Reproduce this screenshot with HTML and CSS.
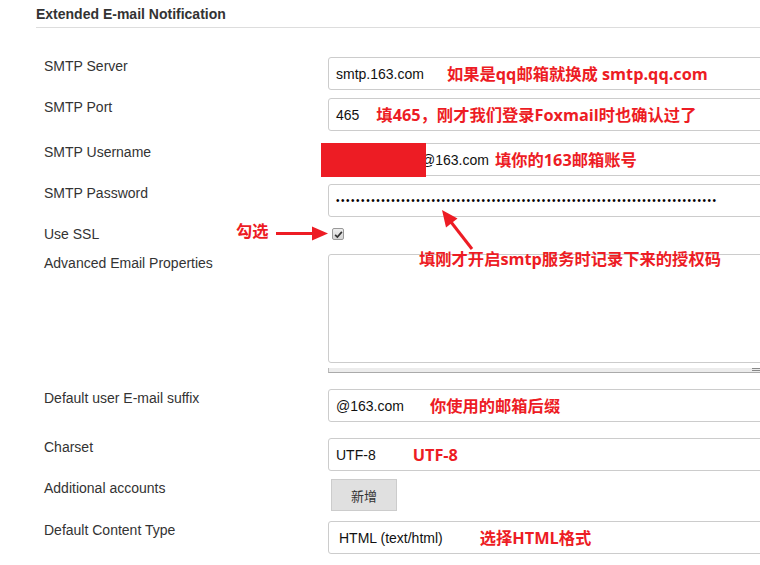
FILE: index.html
```html
<!DOCTYPE html>
<html lang="zh-CN">
<head>
<meta charset="utf-8">
<title>Extended E-mail Notification</title>
<link rel="stylesheet" href="styles.css">
</head>
<body>
<div class="page">
  <h2 class="section-title">Extended E-mail Notification</h2>
  <div class="form">
    <div class="row row-first">
      <div class="label">SMTP Server</div>
      <div class="field"><span class="value">smtp.163.com</span><span class="note note-server">如果是qq邮箱就换成 smtp.qq.com</span></div>
    </div>
    <div class="row">
      <div class="label">SMTP Port</div>
      <div class="field"><span class="value">465</span><span class="note note-port">填465，刚才我们登录Foxmail时也确认过了</span></div>
    </div>
    <div class="row row-gap12">
      <div class="label">SMTP Username</div>
      <div class="field field-user"><span class="value">@163.com</span><span class="note note-user">填你的163邮箱账号</span></div>
    </div>
    <div class="row">
      <div class="label">SMTP Password</div>
      <div class="field"><span class="dots">••••••••••••••••••••••••••••••••••••••••••••••••••••••••••••••••••••••••••••</span></div>
    </div>
    <div class="row row-check">
      <div class="label">Use SSL</div>
      <div class="control"><span class="checkbox"><svg viewBox="0 0 12 12" width="9" height="9"><path d="M1.5 6.5 L4.5 9.5 L10.5 2.5" fill="none" stroke="#333" stroke-width="2.2"/></svg></span></div>
    </div>
    <div class="row row-gap9">
      <div class="label">Advanced Email Properties</div>
      <div class="control">
        <div class="textarea"></div>
        <div class="resize-bar"><span class="grip"></span></div>
      </div>
    </div>
    <div class="row row-gap16">
      <div class="label">Default user E-mail suffix</div>
      <div class="field"><span class="value">@163.com</span><span class="note note-suffix">你使用的邮箱后缀</span></div>
    </div>
    <div class="row row-gap16">
      <div class="label">Charset</div>
      <div class="field"><span class="value">UTF-8</span><span class="note note-charset">UTF-8</span></div>
    </div>
    <div class="row">
      <div class="label">Additional accounts</div>
      <div class="control"><button class="btn" type="button">新增</button></div>
    </div>
    <div class="row row-gap10">
      <div class="label">Default Content Type</div>
      <div class="field field-select"><span class="value">HTML (text/html)</span><span class="note note-type">选择HTML格式</span></div>
    </div>
  </div>

  <div class="redact"></div>
  <span class="note note-ssl">勾选</span>
  <span class="note note-pass">填刚才开启smtp服务时记录下来的授权码</span>
  <svg class="arrows" width="760" height="565" viewBox="0 0 760 565">
    <line x1="276" y1="233.5" x2="315" y2="233.5" stroke="#ed1c24" stroke-width="3"/>
    <polygon points="312,226.5 328,233.5 312,240.5" fill="#ed1c24"/>
    <line x1="472" y1="249" x2="451" y2="222" stroke="#ed1c24" stroke-width="3"/>
    <polygon points="442,210 457.5,218.5 446,227.5" fill="#ed1c24"/>
  </svg>
</div>
</body>
</html>
```

FILE: styles.css
```css
body {
  margin: 0;
  background: #fff;
  font-family: "Liberation Sans", Arial, sans-serif;
  color: #333;
}

.page {
  position: relative;
  width: 760px;
  height: 565px;
  overflow: hidden;
}

.section-title {
  margin: 0 0 0 36px;
  padding: 4px 0 3px;
  font-size: 14px;
  line-height: 20px;
  font-weight: bold;
  color: #333;
  border-bottom: 1px solid #ddd;
}

.form {
  margin: 0 -20px 0 44px;
}

.row {
  display: grid;
  grid-template-columns: 284px 1fr;
  margin-top: 8px;
}

.row-first { margin-top: 29px; }
.row-gap12 { margin-top: 12px; }
.row-gap9 { margin-top: 9px; }
.row-gap16 { margin-top: 16px; }
.row-gap10 { margin-top: 10px; }

.row-check {
  height: 20px;
}

.label {
  padding-top: 1px;
  font-size: 14px;
  line-height: 16px;
  color: #333;
}

.field {
  height: 33px;
  box-sizing: border-box;
  border: 1px solid #ccc;
  border-radius: 3px;
  background: #fff;
  display: flex;
  align-items: center;
  padding-left: 7px;
  font-size: 14px;
  color: #111;
  white-space: nowrap;
}

.field-user { padding-left: 92px; }
.field-select { padding-left: 10px; }

.note {
  font-family: "Open Sans", "Noto Sans CJK SC", sans-serif;
  font-weight: 700;
  font-size: 16.3px;
  line-height: 20px;
  color: #ed1c24;
  white-space: nowrap;
}

.note-server { margin-left: 23px; }
.note-port { margin-left: 17px; }
.note-user { margin-left: 6px; }
.note-suffix { margin-left: 26px; }
.note-charset { margin-left: 37px; }
.note-type { margin-left: 37px; }

.note-ssl {
  position: absolute;
  left: 236px;
  top: 221px;
}

.note-pass {
  position: absolute;
  left: 419px;
  top: 249px;
}

.dots {
  font-size: 10px;
  letter-spacing: 1.52px;
  color: #000;
  line-height: 10px;
}

.checkbox {
  display: flex;
  align-items: center;
  justify-content: center;
  width: 12px;
  height: 12px;
  margin: 3px 0 0 4px;
  box-sizing: border-box;
  border: 1px solid #999;
  border-radius: 2px;
  background: linear-gradient(#eee, #d4d4d4);
}

.textarea {
  height: 109px;
  box-sizing: border-box;
  border: 1px solid #ccc;
  border-radius: 3px;
  background: #fff;
}

.resize-bar {
  margin-top: 5px;
  height: 5px;
  box-sizing: border-box;
  background: #ececec;
  border-left: 1px solid #bbb;
  border-bottom: 1px solid #aaa;
  display: flex;
  justify-content: flex-end;
}

.grip {
  width: 8px;
  height: 3px;
  margin-right: 20px;
  box-sizing: border-box;
  border-top: 1px solid #888;
  border-bottom: 1px solid #888;
}

.btn {
  margin-left: 3px;
  width: 66px;
  height: 32px;
  border: 1px solid #ccc;
  border-radius: 0;
  background: #e0e0e0;
  color: #333;
  font-family: "Noto Sans CJK SC", sans-serif;
  font-size: 13px;
  padding: 0;
}

.redact {
  position: absolute;
  left: 321px;
  top: 143px;
  width: 105px;
  height: 34px;
  background: #ed1c24;
}

.arrows {
  position: absolute;
  left: 0;
  top: 0;
  pointer-events: none;
}
```
